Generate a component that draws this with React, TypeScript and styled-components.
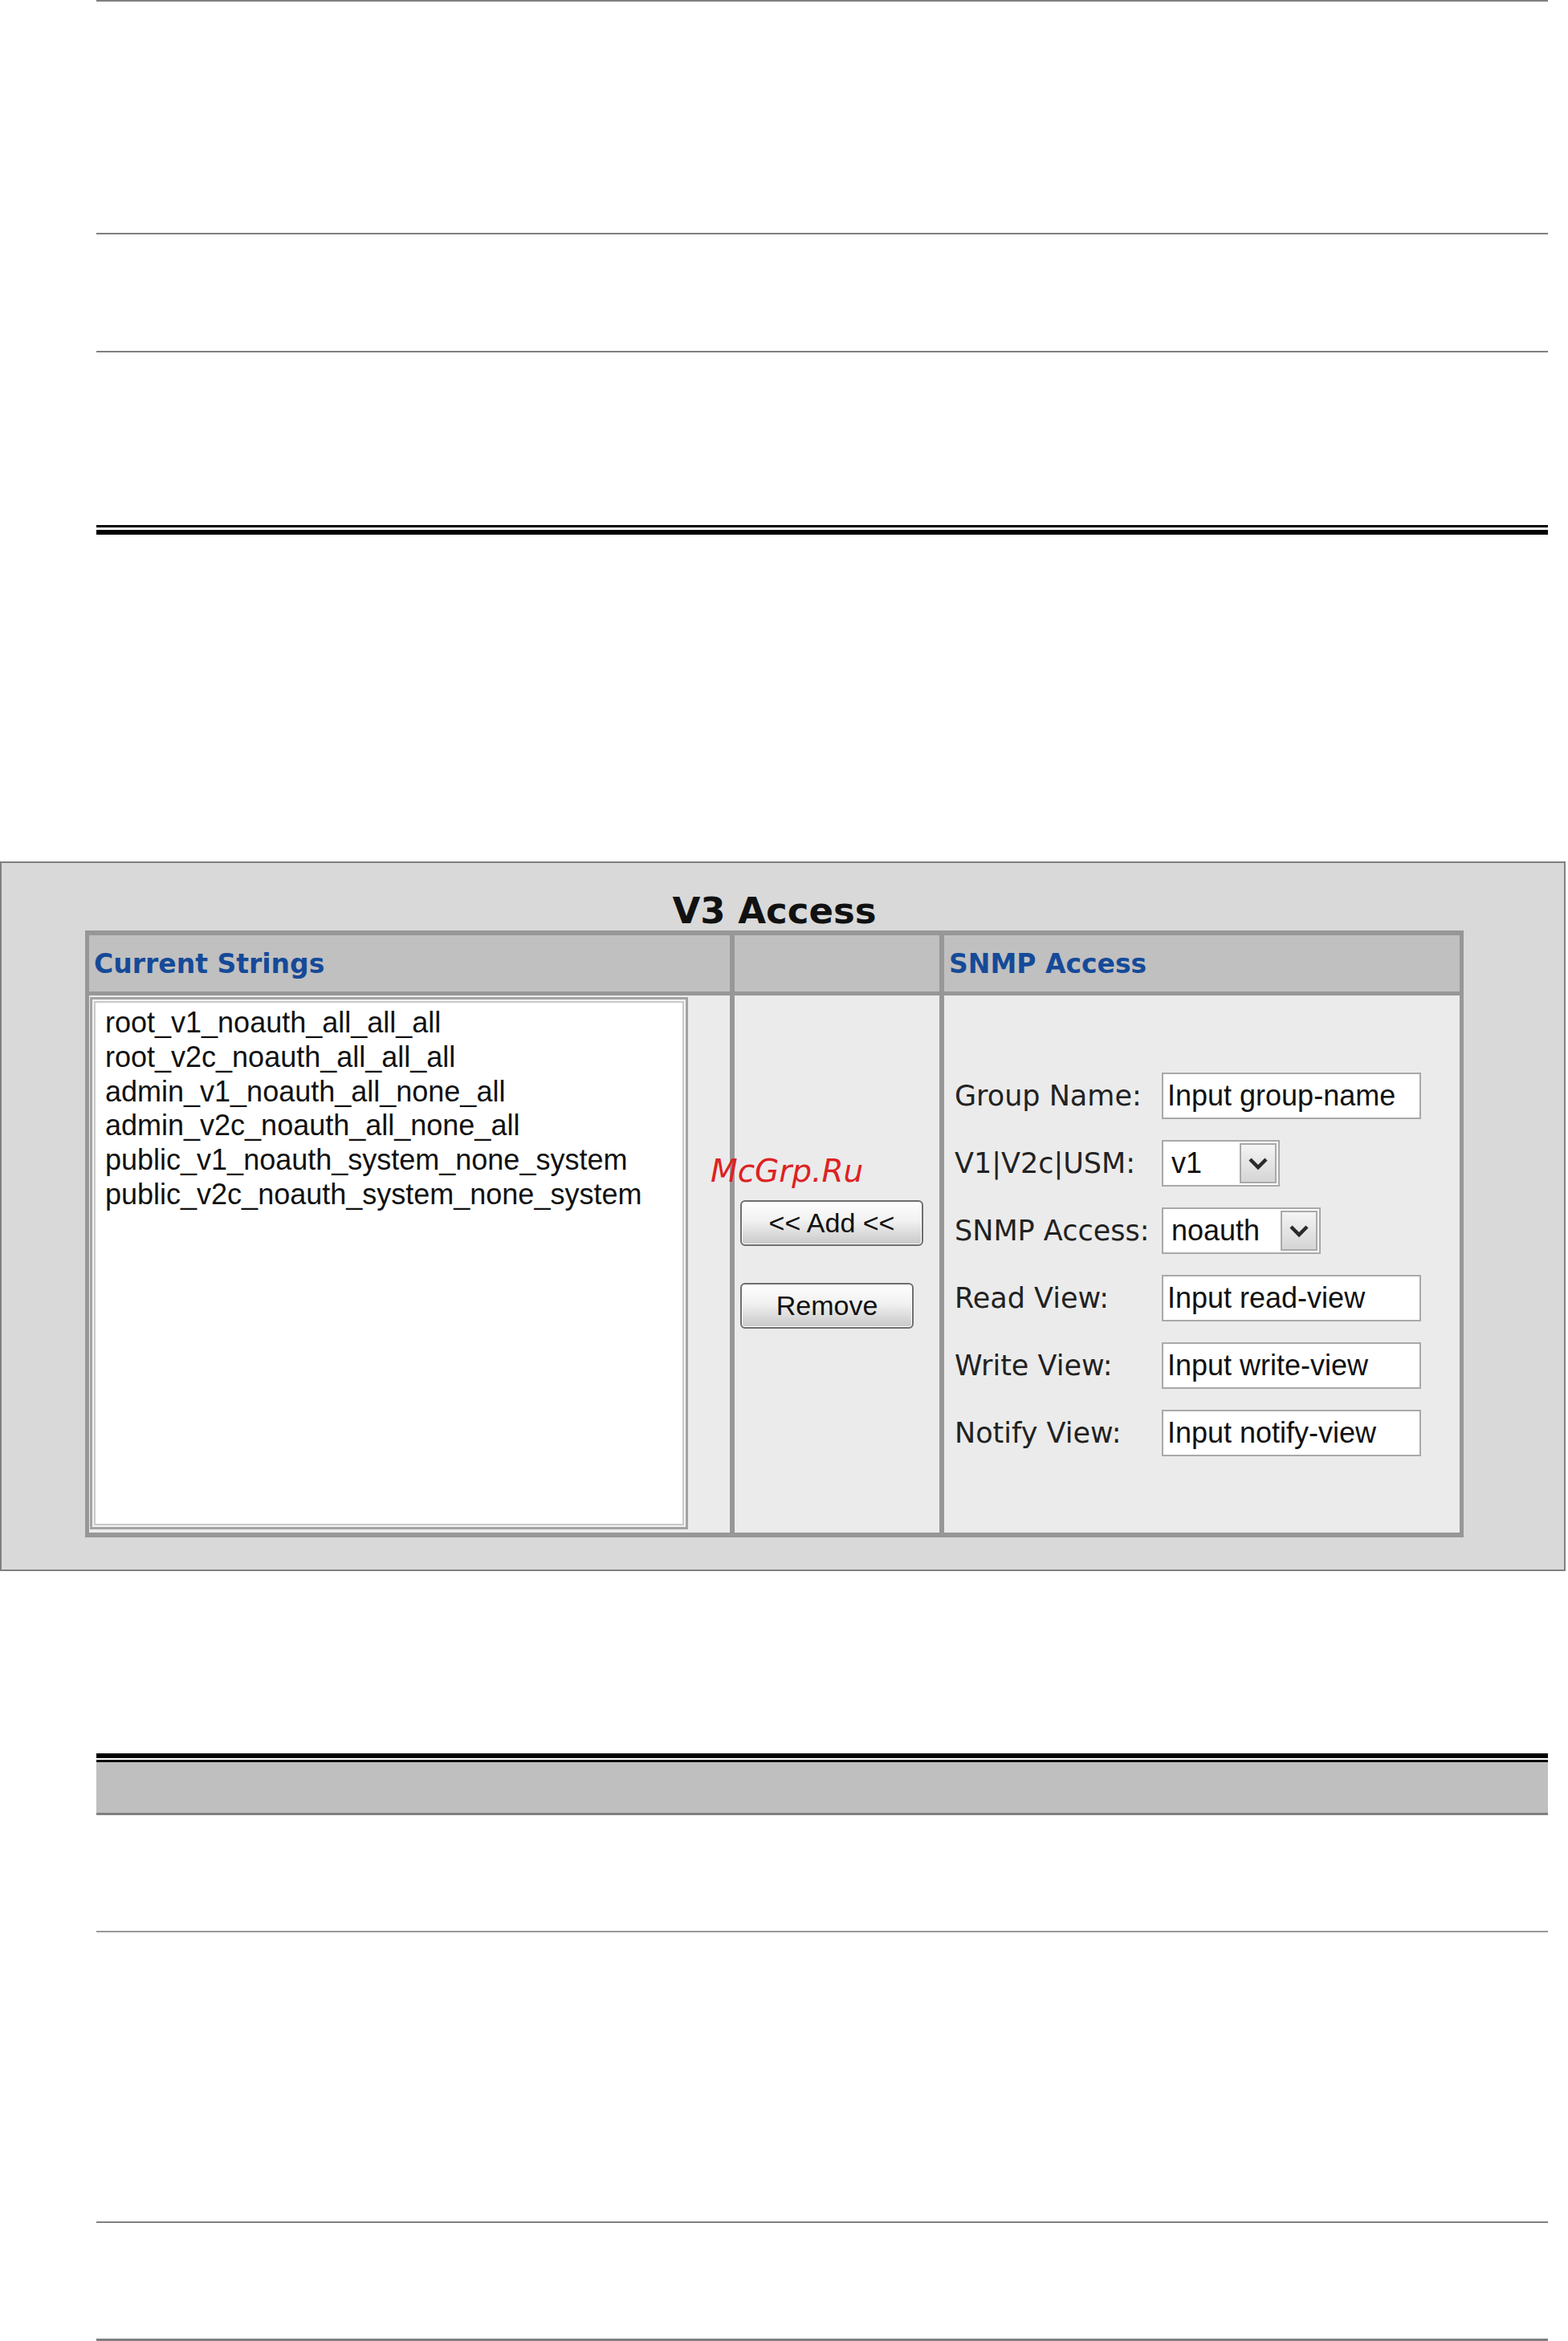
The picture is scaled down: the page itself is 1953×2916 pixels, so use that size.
import React from 'react'
import styled, { createGlobalStyle } from 'styled-components'

const GlobalStyle = createGlobalStyle`
    body {
        margin: 0;
        background: #ffffff;
        font-family: "Liberation Sans", Arial, sans-serif;
    }
`

const Page = styled.div`
    width: 1953px;
`

const Section = styled.div<{ $mt?: number }>`
    margin-left: 120px;
    width: 1808px;
    margin-top: ${p => p.$mt ?? 0}px;
`

const Rule = styled.div<{ $h: number; $c: string; $mt?: number }>`
    height: ${p => p.$h}px;
    background: ${p => p.$c};
    margin-top: ${p => p.$mt ?? 0}px;
`

const Band = styled.div`
    height: 63px;
    background: #bfbfbf;
    border-bottom: 3px solid #808080;
`

const Panel = styled.section`
    position: relative;
    box-sizing: border-box;
    width: 1950px;
    height: 884px;
    margin-top: 407px;
    border: 2px solid #808080;
    background: #d9d9d9;
    padding-top: 37px;
`

const Title = styled.h1`
    margin: 0 0 2px 104px;
    width: 1717px;
    text-align: center;
    font: bold 45px/45px "DejaVu Sans", Verdana, sans-serif;
    color: #111111;
`

const Table = styled.div`
    margin-left: 104px;
    width: 1717px;
    box-sizing: border-box;
    border: 5px solid #979797;
    border-top-width: 6px;
    border-bottom-width: 6px;
    display: grid;
    grid-template-columns: 804px 261px 1fr;
    grid-template-rows: 75px 669px;
    background: #ebebeb;
`

const HeadCell = styled.div<{ $last?: boolean }>`
    box-sizing: border-box;
    background: #c0c0c0;
    border-bottom: 5px solid #979797;
    border-right: ${p => (p.$last ? 'none' : '6px solid #979797')};
    display: flex;
    align-items: center;
    padding-left: 6px;
    font: bold 33px "DejaVu Sans", Verdana, sans-serif;
    color: #154a98;
`

const BodyCell = styled.div<{ $last?: boolean }>`
    box-sizing: border-box;
    border-right: ${p => (p.$last ? 'none' : '6px solid #979797')};
    display: flex;
`

const ListCell = styled(BodyCell)`
    padding: 2px 0 0 1px;
    align-items: flex-start;
`

const ListBox = styled.div`
    box-sizing: border-box;
    width: 745px;
    height: 663px;
    border: 3px solid #a3a3a3;
    background: #f2f2f2;
    padding: 2px;
`

const ListInner = styled.div`
    box-sizing: border-box;
    height: 100%;
    background: #ffffff;
    border: 2px solid #c9c9c9;
    padding: 4px 0 0 12px;
    font: 36px/42.8px "Liberation Sans", Arial, sans-serif;
    color: #111111;
`

const ListItem = styled.div`
    white-space: nowrap;
`

const ButtonCell = styled(BodyCell)`
    flex-direction: column;
    justify-content: center;
    align-items: flex-start;
    padding-left: 7px;
    gap: 46px;
`

const Button = styled.button<{ $w: number }>`
    width: ${p => p.$w}px;
    height: 57px;
    padding: 0;
    border: 2px solid #6e6e6e;
    border-radius: 6px;
    background: linear-gradient(#fefefe, #f1f1f1 45%, #c8c8c8);
    box-shadow: inset 0 0 0 1px #ffffff;
    font: 34px "Liberation Sans", Arial, sans-serif;
    color: #111111;
`

const FormCell = styled(BodyCell)`
    flex-direction: column;
    justify-content: center;
    padding-left: 13px;
    gap: 26px;
`

const FormRow = styled.div`
    display: flex;
    align-items: center;
    height: 58px;
`

const Label = styled.label`
    width: 258px;
    flex-shrink: 0;
    font: 35px "DejaVu Sans", Verdana, sans-serif;
    color: #222222;
    white-space: nowrap;
`

const TextBox = styled.input`
    box-sizing: border-box;
    width: 323px;
    height: 58px;
    border: 2px solid #a9a9a9;
    background: #ffffff;
    padding: 0 0 0 5px;
    font: 36px "Liberation Sans", Arial, sans-serif;
    color: #111111;
    outline: none;
`

const Select = styled.div<{ $w: number }>`
    box-sizing: border-box;
    width: ${p => p.$w}px;
    height: 58px;
    border: 2px solid #a9a9a9;
    background: #ffffff;
    display: flex;
    padding: 2px;
`

const SelectValue = styled.span`
    flex: 1;
    display: flex;
    align-items: center;
    padding-left: 8px;
    font: 36px "Liberation Sans", Arial, sans-serif;
    color: #111111;
`

const SelectArrow = styled.span`
    box-sizing: border-box;
    width: 46px;
    border: 2px solid #a9a9a9;
    background: linear-gradient(#f4f4f4, #d5d5d5);
    display: flex;
    align-items: center;
    justify-content: center;
`

const Watermark = styled.span`
    position: absolute;
    left: 883px;
    top: 364px;
    font: italic 39px/39px "DejaVu Sans", Verdana, sans-serif;
    color: #dd2222;
    pointer-events: none;
`

const strings = [
    'root_v1_noauth_all_all_all',
    'root_v2c_noauth_all_all_all',
    'admin_v1_noauth_all_none_all',
    'admin_v2c_noauth_all_none_all',
    'public_v1_noauth_system_none_system',
    'public_v2c_noauth_system_none_system',
]

const Chevron = () => (
    <svg width="26" height="18" viewBox="0 0 26 18">
        <polyline points="3,4 13,14 23,4" fill="none" stroke="#2a2a2a" strokeWidth="4.5" />
    </svg>
)

const Dropdown = ({ value, width }: { value: string; width: number }) => (
    <Select $w={width}>
        <SelectValue>{value}</SelectValue>
        <SelectArrow><Chevron /></SelectArrow>
    </Select>
)

const App = () => {
    return (
        <Page>
            <GlobalStyle />
            <Section>
                <Rule $h={2} $c="#808080" />
                <Rule $h={2} $c="#808080" $mt={288} />
                <Rule $h={2} $c="#808080" $mt={145} />
                <Rule $h={3} $c="#000000" $mt={215} />
                <Rule $h={6} $c="#000000" $mt={3} />
            </Section>

            <Panel>
                <Title>V3 Access</Title>
                <Table>
                    <HeadCell>Current Strings</HeadCell>
                    <HeadCell></HeadCell>
                    <HeadCell $last>SNMP Access</HeadCell>

                    <ListCell>
                        <ListBox>
                            <ListInner>
                                {strings.map(s => <ListItem key={s}>{s}</ListItem>)}
                            </ListInner>
                        </ListBox>
                    </ListCell>
                    <ButtonCell>
                        <Button $w={228}>&lt;&lt; Add &lt;&lt;</Button>
                        <Button $w={216}>Remove</Button>
                    </ButtonCell>
                    <FormCell $last>
                        <FormRow>
                            <Label>Group Name:</Label>
                            <TextBox defaultValue="Input group-name" />
                        </FormRow>
                        <FormRow>
                            <Label>V1|V2c|USM:</Label>
                            <Dropdown value="v1" width={147} />
                        </FormRow>
                        <FormRow>
                            <Label>SNMP Access:</Label>
                            <Dropdown value="noauth" width={198} />
                        </FormRow>
                        <FormRow>
                            <Label>Read View:</Label>
                            <TextBox defaultValue="Input read-view" />
                        </FormRow>
                        <FormRow>
                            <Label>Write View:</Label>
                            <TextBox defaultValue="Input write-view" />
                        </FormRow>
                        <FormRow>
                            <Label>Notify View:</Label>
                            <TextBox defaultValue="Input notify-view" />
                        </FormRow>
                    </FormCell>
                </Table>
                <Watermark>McGrp.Ru</Watermark>
            </Panel>

            <Section $mt={227}>
                <Rule $h={6} $c="#000000" />
                <Rule $h={3} $c="#000000" $mt={2} />
                <Band />
                <Rule $h={2} $c="#999999" $mt={144} />
                <Rule $h={2} $c="#808080" $mt={360} />
                <Rule $h={3} $c="#808080" $mt={144} />
            </Section>
        </Page>
    )
}

export default App
